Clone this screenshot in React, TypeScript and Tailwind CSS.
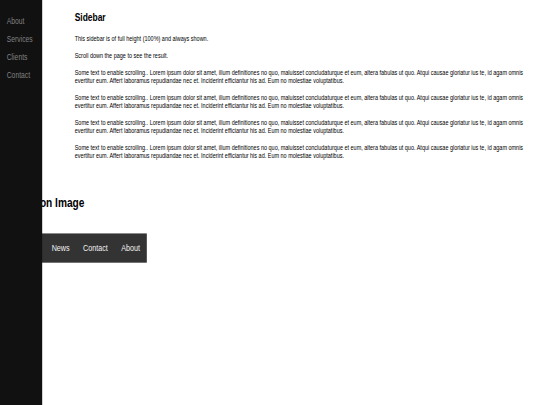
import React from "react";

const lorem =
  "Some text to enable scrolling.. Lorem ipsum dolor sit amet, illum definitiones no quo, maluisset concludaturque et eum, altera fabulas ut quo. Atqui causae gloriatur ius te, id agam omnis evertitur eum. Affert laboramus repudiandae nec et. Inciderint efficiantur his ad. Eum no molestiae voluptatibus.";

export default function App() {
  const side = ["About", "Services", "Clients", "Contact"];
  const top = ["Home", "News", "Contact", "About"];
  return (
    <div className="w-[540px] h-[405px] overflow-hidden bg-white">
      <div className="relative w-[1280px] h-[720px] origin-top-left scale-x-[0.421875] scale-y-[0.5625] bg-white text-black font-['Liberation_Sans',Arial,sans-serif]">
        <nav className="absolute inset-y-0 left-0 z-10 w-[100px] bg-[#111] pt-[22px]">
          {side.map((s) => (
            <a
              key={s}
              href="#"
              className="block py-[6px] pl-[16px] pr-[8px] text-[16px] leading-[19.5px] text-[#818181]"
            >
              {s}
            </a>
          ))}
        </nav>
        <main className="pt-[18.7px]">
          <div className="ml-[177px] mr-[20px]">
            <h2 className="text-[20px] font-bold leading-[23px] mb-[20px]">Sidebar</h2>
            <p className="text-[13px] leading-[14px] mb-[16.5px]">
              This sidebar is of full height (100%) and always shown.
            </p>
            <p className="text-[13px] leading-[14px] mb-[16.5px]">Scroll down the page to see the result.</p>
            <p className="text-[13px] leading-[14px] mb-[16.5px]">{lorem}</p>
            <p className="text-[13px] leading-[14px] mb-[16.5px]">{lorem}</p>
            <p className="text-[13px] leading-[14px] mb-[16.5px]">{lorem}</p>
            <p className="text-[13px] leading-[14px]">{lorem}</p>
          </div>
          <div className="mt-[61.4px] flex w-[200px] justify-end">
            <h2 className="shrink-0 whitespace-nowrap text-[24px] font-bold leading-[28px]">
              Navigation on Image
            </h2>
          </div>
          <div className="mt-[41px] flex w-[348px] justify-end bg-[#333]">
            {top.map((t) => (
              <a
                key={t}
                href="#"
                className="block px-[16px] py-[14px] text-[17px] leading-[24px] text-[#f2f2f2]"
              >
                {t}
              </a>
            ))}
          </div>
        </main>
      </div>
    </div>
  );
}
